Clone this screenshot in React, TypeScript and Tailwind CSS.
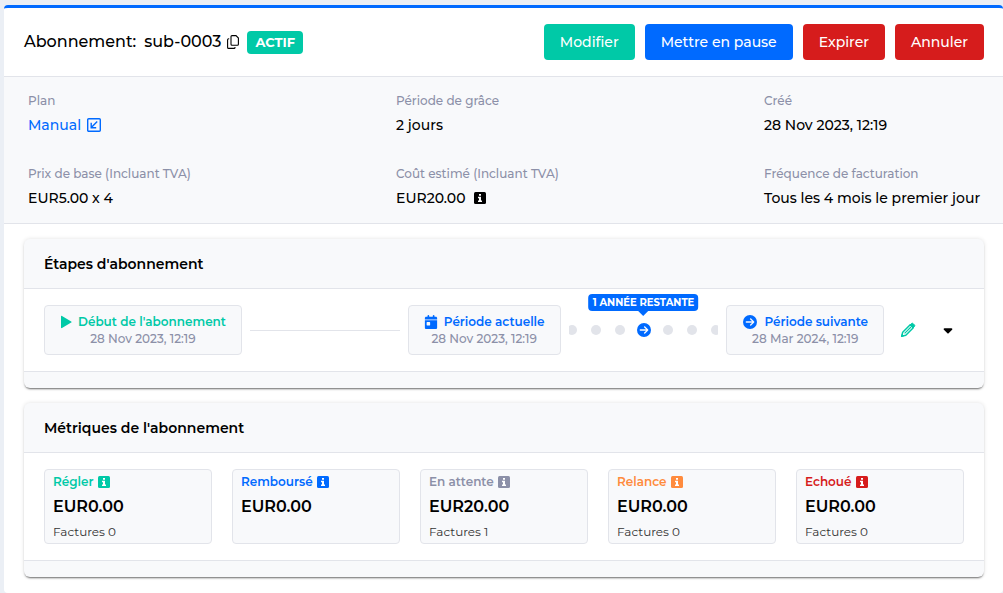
import type { ReactNode } from "react";
import { FaCalendarDay, FaCaretDown, FaCircleArrowRight } from "react-icons/fa6";

const metrics = [
  { label: "Régler", amount: "EUR0.00", invoices: 0, color: "text-[#00c9a7]" },
  { label: "Remboursé", amount: "EUR0.00", color: "text-[#006aff]" },
  { label: "En attente", amount: "EUR20.00", invoices: 1, color: "text-[#8c90a8]" },
  { label: "Relance", amount: "EUR0.00", invoices: 0, color: "text-[#ff8b3d]" },
  { label: "Echoué", amount: "EUR0.00", invoices: 0, color: "text-[#d61c1c]" },
];

const actions = [
  { label: "Modifier", color: "bg-[#00c9a7]" },
  { label: "Mettre en pause", color: "bg-[#006aff]" },
  { label: "Expirer", color: "bg-[#d61c1c]" },
  { label: "Annuler", color: "bg-[#d61c1c]" },
];

function InfoIcon() {
  return (
    <svg viewBox="0 0 12 12" className="size-3 shrink-0" aria-hidden="true">
      <rect width="12" height="12" rx="1.5" fill="currentColor" />
      <path fill="#fff" d="M5 2h2v1.7H5zM4 4.8h3v3.7h1V10H4V8.5h1V6.2H4z" />
    </svg>
  );
}

function CopyIcon() {
  return (
    <svg viewBox="0 0 12 14" className="h-[14px] w-3" fill="none" stroke="currentColor" strokeWidth="1.1" aria-hidden="true">
      <path d="M5 .6h4l2.4 2.4v6.2a1 1 0 0 1-1 1H5a1 1 0 0 1-1-1V1.6a1 1 0 0 1 1-1z" />
      <path d="M2.2 3.8h-.6a1 1 0 0 0-1 1v7.600a1 1 0 0 0 1 1H7a1 1 0 0 0 1-1v-.4" />
    </svg>
  );
}

function OpenIcon() {
  return (
    <svg viewBox="0 0 14 14" className="size-[14px]" fill="none" stroke="currentColor" strokeWidth="1.4" aria-hidden="true">
      <rect x=".7" y=".7" width="12.6" height="12.6" rx="1" />
      <path d="M10.2 3.5 4.3 9.6M4.2 4.8v5h5" />
    </svg>
  );
}

function PlayIcon() {
  return (
    <svg viewBox="0 0 12 14" className="h-[14px] w-3" aria-hidden="true">
      <path fill="currentColor" d="M1 1.4c0-.6.5-.8 1-.5l9.2 5.5c.5.3.5.9 0 1.2L2 13.100c-.5.3-1 .1-1-.5z" />
    </svg>
  );
}

function PencilIcon() {
  return (
    <svg viewBox="0 0 16 16" className="size-4" fill="none" stroke="currentColor" aria-hidden="true">
      <path strokeWidth="1.5" strokeLinejoin="round" d="M1.7 14.3 2.7 10.2 10.2 2.7l3.1 3.1-7.5 7.5z" />
      <path strokeWidth="1.1" d="M4.600 11.400 11 5" />
      <path
        fill="currentColor"
        strokeWidth="1"
        strokeLinejoin="round"
        d="m10.1 2.9 1.3-1.3a1.2 1.2 0 0 1 1.7 0l1.3 1.3a1.2 1.2 0 0 1 0 1.700l-1.3 1.3zM1.700 14.300l.5-2.100 1.600 1.600z"
      />
    </svg>
  );
}

function Detail({ label, children }: { label: string; children: ReactNode }) {
  return (
    <div>
      <dt className="text-xs leading-5 font-medium text-[#8c90a8]">{label}</dt>
      <dd className="mt-0.5 flex items-center gap-2 text-sm leading-6 font-medium whitespace-nowrap">{children}</dd>
    </div>
  );
}

function Panel({ title, children }: { title: string; children: ReactNode }) {
  return (
    <section className="rounded-md bg-[#f8f9fb] shadow-[0_2px_2px_-1px_rgba(0,0,0,0.55),0_0_4px_rgba(0,0,0,0.12)]">
      <h2 className="border-b border-[#e2e4ea] px-5 pt-[13px] pb-3 text-sm leading-6 font-semibold">{title}</h2>
      <div className="bg-white px-5 py-4">{children}</div>
      <div className="h-[17px] border-t border-[#e2e4ea]" />
    </section>
  );
}

interface StepProps {
  icon: ReactNode;
  title: string;
  date: string;
  color: string;
}

function Step({ icon, title, date, color }: StepProps) {
  return (
    <div className="shrink-0 rounded border border-[#e2e4ea] bg-[#f8f9fb] px-[15px] py-[7px] text-center text-xs leading-[17px] whitespace-nowrap">
      <div className={`flex items-center justify-center gap-1.5 font-semibold ${color}`}>
        {icon}
        {title}
      </div>
      <div className="font-medium text-[#8c90a8]">{date}</div>
    </div>
  );
}

function RemainingTime() {
  return (
    <div className="relative min-w-0 flex-1">
      <div className="flex justify-center overflow-hidden">
        {[0, 1, 2, 3, 4, 5, 6].map((i) => (
          <div key={i} className="flex h-6 w-6 shrink-0 items-center justify-center">
            {i === 3 ? (
              <FaCircleArrowRight className="size-[14px] text-[#006aff]" />
            ) : (
              <span className="size-[10px] rounded-full bg-[#e2e4ea]" />
            )}
          </div>
        ))}
      </div>
      <div className="absolute bottom-full left-1/2 mb-[7px] -translate-x-1/2 rounded-sm bg-[#006aff] px-1 text-[10px] leading-[17px] font-bold whitespace-nowrap text-white">
        1 ANNÉE RESTANTE
        <span className="absolute top-full left-1/2 -translate-x-1/2 border-x-5 border-t-5 border-x-transparent border-t-[#006aff]" />
      </div>
    </div>
  );
}

export default function App() {
  return (
    <div className="min-h-screen bg-[#ebeff5] pt-[5px] pl-1 font-['Montserrat','Inter',sans-serif] text-black">
      <main className="rounded-sm border-t-3 border-[#006aff] bg-white">
        <header className="flex items-center justify-between border-b border-[#e2e4ea] py-4 pr-[19px] pl-5">
          <div className="flex items-center">
            <h1 className="flex gap-2 text-base leading-6 font-medium">
              <span>Abonnement:</span>
              <span>sub-0003</span>
            </h1>
            <button type="button" aria-label="Copier" className="px-1.5">
              <CopyIcon />
            </button>
            <span className="ml-0.5 rounded-sm bg-[#00c9a7] px-2 text-[13px] leading-[23px] font-bold text-white">
              ACTIF
            </span>
          </div>
          <div className="flex gap-[10px]">
            {actions.map((action) => (
              <button
                key={action.label}
                type="button"
                className={`rounded px-4 text-sm leading-9 font-medium text-white ${action.color}`}
              >
                {action.label}
              </button>
            ))}
          </div>
        </header>

        <dl className="grid grid-cols-[1fr_1fr_216px] gap-y-[27px] border-b border-[#e2e4ea] bg-[#f8f9fb] pt-[14px] pr-[23px] pb-[13px] pl-6">
          <Detail label="Plan">
            <a href="#" className="flex items-center gap-1.5 text-[#006aff]">
              Manual
              <OpenIcon />
            </a>
          </Detail>
          <Detail label="Période de grâce">2 jours</Detail>
          <Detail label="Créé">28 Nov 2023, 12:19</Detail>
          <Detail label="Prix de base (Incluant TVA)">EUR5.00 x 4</Detail>
          <Detail label="Coût estimé (Incluant TVA)">
            EUR20.00
            <InfoIcon />
          </Detail>
          <Detail label="Fréquence de facturation">Tous les 4 mois le premier jour</Detail>
        </dl>

        <div className="flex flex-col gap-[15px] pt-[15px] pr-[19px] pb-4 pl-5">
          <Panel title="Étapes d'abonnement">
            <div className="flex items-center">
              <div className="flex min-w-0 flex-1 items-center gap-2">
                <Step
                  icon={<PlayIcon />}
                  title="Début de l'abonnement"
                  date="28 Nov 2023, 12:19"
                  color="text-[#00c9a7]"
                />
                <div className="h-px flex-1 bg-[#e2e4ea]" />
                <Step
                  icon={<FaCalendarDay className="size-[14px]" />}
                  title="Période actuelle"
                  date="28 Nov 2023, 12:19"
                  color="text-[#006aff]"
                />
                <RemainingTime />
                <Step
                  icon={<FaCircleArrowRight className="size-4 p-px" />}
                  title="Période suivante"
                  date="28 Mar 2024, 12:19"
                  color="text-[#006aff]"
                />
              </div>
              <button type="button" aria-label="Modifier la période" className="px-4 text-[#00c9a7]">
                <PencilIcon />
              </button>
              <button type="button" aria-label="Plus d'options" className="flex w-8 justify-center">
                <FaCaretDown className="size-[14px]" />
              </button>
            </div>
          </Panel>

          <Panel title="Métriques de l'abonnement">
            <div className="grid grid-cols-5 gap-5">
              {metrics.map((metric) => (
                <div key={metric.label} className="h-[75px] rounded-sm border border-[#e2e4ea] bg-[#f8f9fb] px-2 py-[3px]">
                  <div className={`flex items-center gap-1 text-xs leading-[18px] font-semibold ${metric.color}`}>
                    {metric.label}
                    <InfoIcon />
                  </div>
                  <div className="text-base leading-8 font-semibold">{metric.amount}</div>
                  {metric.invoices !== undefined && (
                    <div className="text-xs leading-[18px] text-[#333]">Factures {metric.invoices}</div>
                  )}
                </div>
              ))}
            </div>
          </Panel>
        </div>
      </main>
    </div>
  );
}
